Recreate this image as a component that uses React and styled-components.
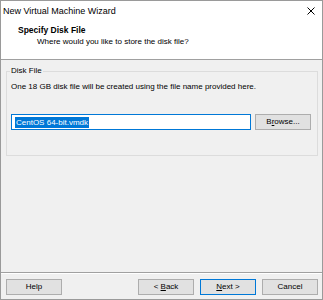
import React from "react";
import styled, { createGlobalStyle } from "styled-components";

const GlobalStyle = createGlobalStyle`
  html, body {
    margin: 0;
    padding: 0;
    background: #ffffff;
  }
  body {
    font-family: "Liberation Sans", Arial, sans-serif;
  }
`;

const Window = styled.div`
  width: 323px;
  height: 300px;
  box-sizing: border-box;
  border: 1px solid #9a9a9a;
  background: #f0f0f0;
  display: flex;
  flex-direction: column;
  font-size: 8px;
  color: #000;
`;

const TitleBar = styled.div`
  height: 20px;
  background: #fff;
  display: flex;
  align-items: center;
  justify-content: space-between;
  padding: 0 7px 0 2px;
`;

const Title = styled.span`
  font-size: 9px;
  line-height: 11px;
`;

const Header = styled.div`
  height: 34px;
  padding-top: 4px;
  background: #fff;
  border-bottom: 1px solid #a0a0a0;
`;

const StepTitle = styled.div`
  padding-left: 17px;
  font-weight: bold;
  font-size: 8.5px;
  line-height: 11px;
`;

const StepHint = styled.div`
  padding-left: 36px;
  line-height: 12px;
`;

const Body = styled.div`
  flex: 1;
  padding: 5px 4px 0 5px;
`;

const GroupBox = styled.fieldset`
  margin: 0;
  padding: 0 6px 25px 4px;
  border: 1px solid #dcdcdc;
  min-width: 0;
`;

const Legend = styled.legend`
  padding: 0 1px;
  margin-left: -1px;
  line-height: 12px;
`;

const Desc = styled.div`
  margin-top: 4px;
  line-height: 12px;
`;

const FileRow = styled.div`
  margin-top: 21px;
  display: flex;
  gap: 4px;
  align-items: flex-start;
`;

const Field = styled.div`
  width: 240px;
  height: 16px;
  box-sizing: border-box;
  border: 1px solid #0078d7;
  background: #fff;
  padding-left: 3px;
  display: flex;
  align-items: center;
`;

const Selected = styled.span`
  background: #0078d7;
  color: #fff;
  line-height: 11px;
  padding: 0 1px;
`;

const Button = styled.button`
  width: 56px;
  height: 16px;
  box-sizing: border-box;
  padding: 0;
  margin: 0;
  border: 1px solid ${({ $default }) => ($default ? "#0078d7" : "#adadad")};
  background: #e1e1e1;
  font-family: inherit;
  font-size: 8px;
  color: #000;
  line-height: 12px;
`;

const Footer = styled.div`
  border-top: 1px solid #a0a0a0;
  box-shadow: inset 0 1px 0 #ffffff;
  padding: 6px 4px 4px 5px;
  display: flex;
  gap: 6px;
`;

const Spacer = styled.div`
  flex: 1;
`;

function CloseIcon() {
  return (
    <svg width="8" height="8" viewBox="0 0 8 8">
      <path d="M0.5 0.5 L7.5 7.5 M7.5 0.5 L0.5 7.5" stroke="#000" strokeWidth="1" fill="none" />
    </svg>
  );
}

export default function App() {
  return (
    <>
      <GlobalStyle />
      <Window>
        <TitleBar>
          <Title>New Virtual Machine Wizard</Title>
          <CloseIcon />
        </TitleBar>
        <Header>
          <StepTitle>Specify Disk File</StepTitle>
          <StepHint>Where would you like to store the disk file?</StepHint>
        </Header>
        <Body>
          <GroupBox>
            <Legend>Disk File</Legend>
            <Desc>One 18 GB disk file will be created using the file name provided here.</Desc>
            <FileRow>
              <Field>
                <Selected>CentOS 64-bit.vmdk</Selected>
              </Field>
              <Button>
                B<u>r</u>owse...
              </Button>
            </FileRow>
          </GroupBox>
        </Body>
        <Footer>
          <Button>Help</Button>
          <Spacer />
          <Button>
            &lt; <u>B</u>ack
          </Button>
          <Button $default>
            <u>N</u>ext &gt;
          </Button>
          <Button>Cancel</Button>
        </Footer>
      </Window>
    </>
  );
}
